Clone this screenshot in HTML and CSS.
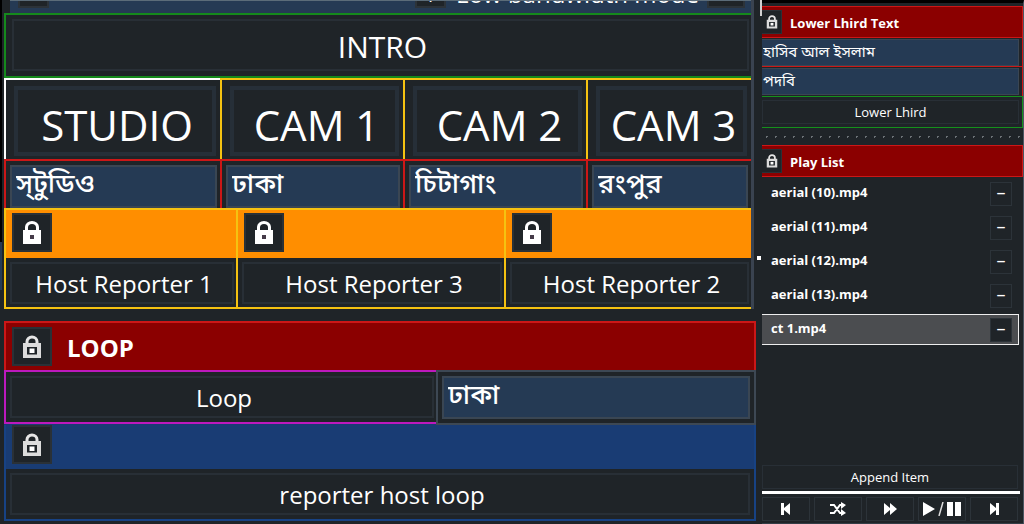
FILE: index.html
```html
<!DOCTYPE html>
<html lang="en">
<head>
<meta charset="utf-8">
<title>Broadcast control</title>
<link rel="stylesheet" href="styles.css">
</head>
<body>
<svg class="sprite" aria-hidden="true">
  <symbol id="locked" viewBox="0 0 20 24">
    <path d="M1 9h2V6a7 6 0 0 1 14 0v3h2v14H1zM6 9h8V6.500a4 3.500 0 0 0-8 0z" fill="#fff" fill-rule="evenodd"/>
    <path d="M8 14h4v4H8z" fill="#453a48"/>
  </symbol>
  <symbol id="unlocked" viewBox="0 0 20 24">
    <path d="M5 9V6.500a5 4.500 0 0 1 10 0V9" fill="none" stroke="#e6e6e6" stroke-width="3"/>
    <path d="M1 8h18v15H1zM5 12v7.500h10V12z" fill="#dcdcdc" fill-rule="evenodd"/>
    <path d="M7.500 13.500h5v4.500h-5z" fill="#fff"/>
  </symbol>
</svg>
<main class="app">
  <section class="left">
    <div class="upper">
      <header class="mode">
        <span class="stub stub-a"></span>
        <span class="stub stub-b">+</span>
        <span class="mode-text">Low bandwidth mode</span>
        <span class="stub stub-c"></span>
      </header>
      <div class="intro"><button class="btn btn-intro">INTRO</button></div>
      <div class="cams">
        <div class="cam cam-on"><button class="btn btn-cam">STUDIO</button></div>
        <div class="cam"><button class="btn btn-cam">CAM 1</button></div>
        <div class="cam"><button class="btn btn-cam">CAM 2</button></div>
        <div class="cam"><button class="btn btn-cam">CAM 3</button></div>
        <div class="place"><input class="field" aria-label="Studio name" value="স্‌টুডিও"></div>
        <div class="place"><input class="field" aria-label="Cam 1 place" value="ঢাকা"></div>
        <div class="place"><input class="field" aria-label="Cam 2 place" value="চিটাগাং"></div>
        <div class="place"><input class="field" aria-label="Cam 3 place" value="রংপুর"></div>
      </div>
      <div class="hosts">
        <div class="host">
          <div class="host-head"><button class="lock" aria-label="Lock reporter 1"><svg><use href="#locked"/></svg></button></div>
          <div class="host-body"><button class="btn">Host Reporter 1</button></div>
        </div>
        <div class="host">
          <div class="host-head"><button class="lock" aria-label="Lock reporter 3"><svg><use href="#locked"/></svg></button></div>
          <div class="host-body"><button class="btn">Host Reporter 3</button></div>
        </div>
        <div class="host">
          <div class="host-head"><button class="lock" aria-label="Lock reporter 2"><svg><use href="#locked"/></svg></button></div>
          <div class="host-body"><button class="btn">Host Reporter 2</button></div>
        </div>
      </div>
    </div>
    <div class="lower">
      <div class="loop-head"><button class="lock" aria-label="Lock loop"><svg><use href="#unlocked"/></svg></button><h2>LOOP</h2></div>
      <div class="loop-row">
        <div class="loop-cell"><button class="btn">Loop</button></div>
        <div class="loop-place"><input class="field" aria-label="Loop place" value="ঢাকা"></div>
      </div>
      <div class="rep">
        <div class="rep-head"><button class="lock" aria-label="Lock reporter loop"><svg><use href="#unlocked"/></svg></button></div>
        <div class="rep-body"><button class="btn">reporter host loop</button></div>
      </div>
    </div>
    <span class="edge"></span>
    <span class="grip"></span>
  </section>
  <aside class="right">
    <div class="side-head"><button class="lock lock-s" aria-label="Lock lower third"><svg><use href="#unlocked"/></svg></button><h3>Lower Lhird Text</h3></div>
    <div class="side-field"><input class="field field-s" aria-label="Name" value="হাসিব আল ইসলাম"></div>
    <div class="side-field"><input class="field field-s" aria-label="Title" value="পদবি"></div>
    <div class="side-go"><button class="btn btn-s">Lower Lhird</button></div>
    <div class="dots"></div>
    <div class="side-head"><button class="lock lock-s" aria-label="Lock play list"><svg><use href="#unlocked"/></svg></button><h3>Play List</h3></div>
    <ul class="list">
      <li><span>aerial (10).mp4</span><button class="minus" aria-label="Remove aerial (10)">–</button></li>
      <li><span>aerial (11).mp4</span><button class="minus" aria-label="Remove aerial (11)">–</button></li>
      <li><span>aerial (12).mp4</span><button class="minus" aria-label="Remove aerial (12)">–</button></li>
      <li><span>aerial (13).mp4</span><button class="minus" aria-label="Remove aerial (13)">–</button></li>
      <li class="sel"><span>ct 1.mp4</span><button class="minus" aria-label="Remove ct 1">–</button></li>
    </ul>
    <button class="btn btn-s append">Append Item</button>
    <div class="player">
      <button aria-label="Previous"><svg width="10" height="14" viewBox="0 0 10 14"><path d="M0 1h3v5l6-5v12L3 8v5H0z"/></svg></button>
      <button aria-label="Shuffle"><svg width="16" height="14" viewBox="0 0 16 14"><path d="M0 3h4l6 8h2M0 11h4l6-8h2" fill="none" stroke="#fff" stroke-width="2"/><path d="M11 0l5 3-5 4zM11 7l5 4-5 3z"/></svg></button>
      <button aria-label="Fast forward"><svg width="13" height="12" viewBox="0 0 13 12"><path d="M0 0l6 5V0l7 6-7 6V7l-6 5z"/></svg></button>
      <button aria-label="Play or pause"><svg width="38" height="14" viewBox="0 0 38 14"><path d="M0 0l12 7-12 7zM24 0h6v14h-6zM32 0h6v14h-6z"/><path d="M20 0l-4 14" stroke="#ddd" stroke-width="1.500"/></svg></button>
      <button aria-label="Next"><svg width="10" height="14" viewBox="0 0 10 14"><path d="M10 1H7v5L1 1v12l6-5v5h3z"/></svg></button>
    </div>
  </aside>
</main>
</body>
</html>
```
FILE: styles.css
```css
* { box-sizing: border-box; }
body {
  margin: 0;
  background: #1f2428;
  color: #fff;
  font-family: "Open Sans", "Noto Sans", "Noto Sans Bengali", sans-serif;
  font-size: 24px;
}
.sprite { position: absolute; width: 0; height: 0; }
.app { display: grid; grid-template-columns: 762fr 262fr; min-height: 100vh; }
button, input { font: inherit; color: inherit; margin: 0; border-radius: 0; }
h2, h3 { margin: 0; font-size: 24px; font-weight: 700; }

.btn {
  display: block;
  width: 100%;
  height: 42px;
  padding: 2px 0 0 4px;
  background: #1f2428;
  border: 2px solid #282f36;
  line-height: 36px;
}
.field {
  display: block;
  width: 100%;
  height: 43px;
  padding: 0 4px 5px;
  background: #253a54;
  border: 2px solid #3a4653;
  font-size: 27px;
  font-weight: 500;
}
.lock {
  display: flex;
  align-items: center;
  justify-content: center;
  width: 40px;
  height: 39px;
  padding: 0;
  background: #1f2428;
  border: 2px solid #2a3137;
}
.lock svg { width: 20px; height: 24px; }

.left {
  position: relative;
  min-width: 0;
  padding: 0 6px 4px 4px;
  background:
    linear-gradient(#000, #000) 0 0 / 2px 242px no-repeat,
    linear-gradient(#253a54, #253a54) 0 242px / 2px 48px no-repeat;
}
.upper { margin-right: 2px; border-right: 3px solid #3a4350; }
.mode {
  display: flex;
  align-items: flex-end;
  height: 13px;
  margin-left: 6px;
  padding: 0 6px 0 8px;
  overflow: hidden;
  background: #253a54;
  border-top: 1px solid #5b6c79;
}
.stub { flex: none; width: 31px; height: 36px; margin-bottom: 5px; background: #1f2428; border: 2px solid #2c3339; text-align: center; line-height: 44px; }
.stub-b { margin-left: auto; margin-right: 10px; }
.stub-c { width: 38px; margin-left: 8px; }
.mode-text { padding-bottom: 1px; line-height: 36px; white-space: nowrap; font-weight: 500; }

.intro { padding: 4px 2px 5px 6px; border: 2px solid #158a1c; border-right: 0; }
.btn-intro { height: 52px; font-size: 30px; line-height: 48px; }

.cams { display: grid; grid-template-columns: 216fr 183fr 183fr 165fr; }
.cam { min-width: 0; padding: 6px 4px 3px 8px; border-top: 2px solid #f5c211; border-left: 2px solid #f5c211; }
.cam-on { border-color: #fff; }
.btn-cam { height: 70px; border-width: 4px; border-color: #262f38; font-size: 42px; line-height: 66px; white-space: nowrap; }
.place { min-width: 0; padding: 4px 3px 0 4px; border-top: 2px solid #cc1717; border-left: 2px solid #cc1717; }

.hosts { display: grid; grid-template-columns: 232fr 268fr 247fr; border-bottom: 2px solid #f5c211; }
.host { min-width: 0; border-top: 2px solid #f5c211; border-left: 2px solid #f5c211; }
.host-head { height: 48px; padding: 3px 6px; background: #ff8e00; }
.host-body { padding: 4px 2px 3px 4px; }

.lower { margin-top: 12px; }
.loop-head { display: flex; gap: 15px; height: 49px; padding: 4px 6px; background: #8b0000; border: 2px solid #cc1717; border-bottom: 0; }
.loop-head h2 { line-height: 42px; }
.loop-row { display: grid; grid-template-columns: 432fr 320fr; align-items: start; background: #193c74; }
.loop-cell { padding: 4px 2px 4px 4px; background: #1f2428; border: 2px solid #bd19bd; border-right: 0; }
.loop-place { padding: 4px; background: #1f2428; border: 2px solid #3d4854; }
.rep { border: 2px solid #174284; border-top: 0; }
.rep-head { height: 44px; padding: 0 6px; background: #193c74; }
.rep-body { padding: 4px; }
.edge { position: absolute; right: 0; top: 0; width: 2px; height: 16px; background: #d0d0d0; }
.grip { position: absolute; right: 1px; top: 256px; width: 4px; height: 4px; background: #fff; }

.right {
  display: flex;
  flex-direction: column;
  min-width: 0;
  font-size: 13px;
  border-top: 3px solid #000;
  border-right: 1px solid #4b5661;
  border-bottom: 2px solid #333d46;
  padding: 3px 0 2px;
}
.side-head { display: flex; gap: 8px; height: 32px; padding: 3px 0; background: #8b0000; border: 1px solid #cc1717; border-left: 0; flex: none; }
.side-head h3 { font-size: 13px; line-height: 26px; }
.lock-s { width: 20px; height: 24px; border-width: 1px; border-left: 0; }
.lock-s svg { width: 12px; height: 14px; }
.side-field { height: 29px; padding: 1px 3px 1px 0; border-right: 1px solid #cc1717; border-bottom: 1px solid #cc1717; }
.side-field:nth-of-type(3) { border-bottom: 0; }
.field-s { height: 27px; padding: 0 1px 2px; border-width: 1px; border-left: 0; font-size: 15px; font-weight: 400; }
.side-go { height: 32px; padding: 3px 3px 3px 0; border: 1px solid #15901c; border-left: 0; }
.btn-s { height: 24px; padding: 0; border-width: 1px; line-height: 22px; }
.dots { height: 17px; background: radial-gradient(circle, #6c7276 1px, transparent 1px) 0 0 / 9px 17px; }
.list { margin: 1px 4px 0 0; padding: 0; list-style: none; font-weight: 700; display: flex; flex-direction: column; gap: 3px; }
.list li { display: flex; justify-content: space-between; align-items: center; height: 31px; padding: 0 6px 0 8px; border: 1px solid transparent; line-height: 24px; }
.list span { padding-bottom: 4px; }
.list .sel { background: #4b4d50; border-color: #eee; border-left: 0; padding-left: 9px; }
.minus { width: 22px; height: 24px; padding: 0 0 4px; background: #1f2428; border: 1px solid #2c3339; font-size: 18px; font-weight: 400; line-height: 18px; }
.append { margin-top: auto; width: calc(100% - 5px); flex: none; }
.player { display: grid; grid-template-columns: repeat(5, 1fr); gap: 4px; margin: 2px 3px 0 0; padding: 3px 2px 0 0; border-top: 3px solid #fff; }
.player button { display: flex; align-items: center; justify-content: center; height: 24px; padding: 0; background: #1f2428; border: 1px solid #2c3339; }
.player svg { fill: #fff; }
```
